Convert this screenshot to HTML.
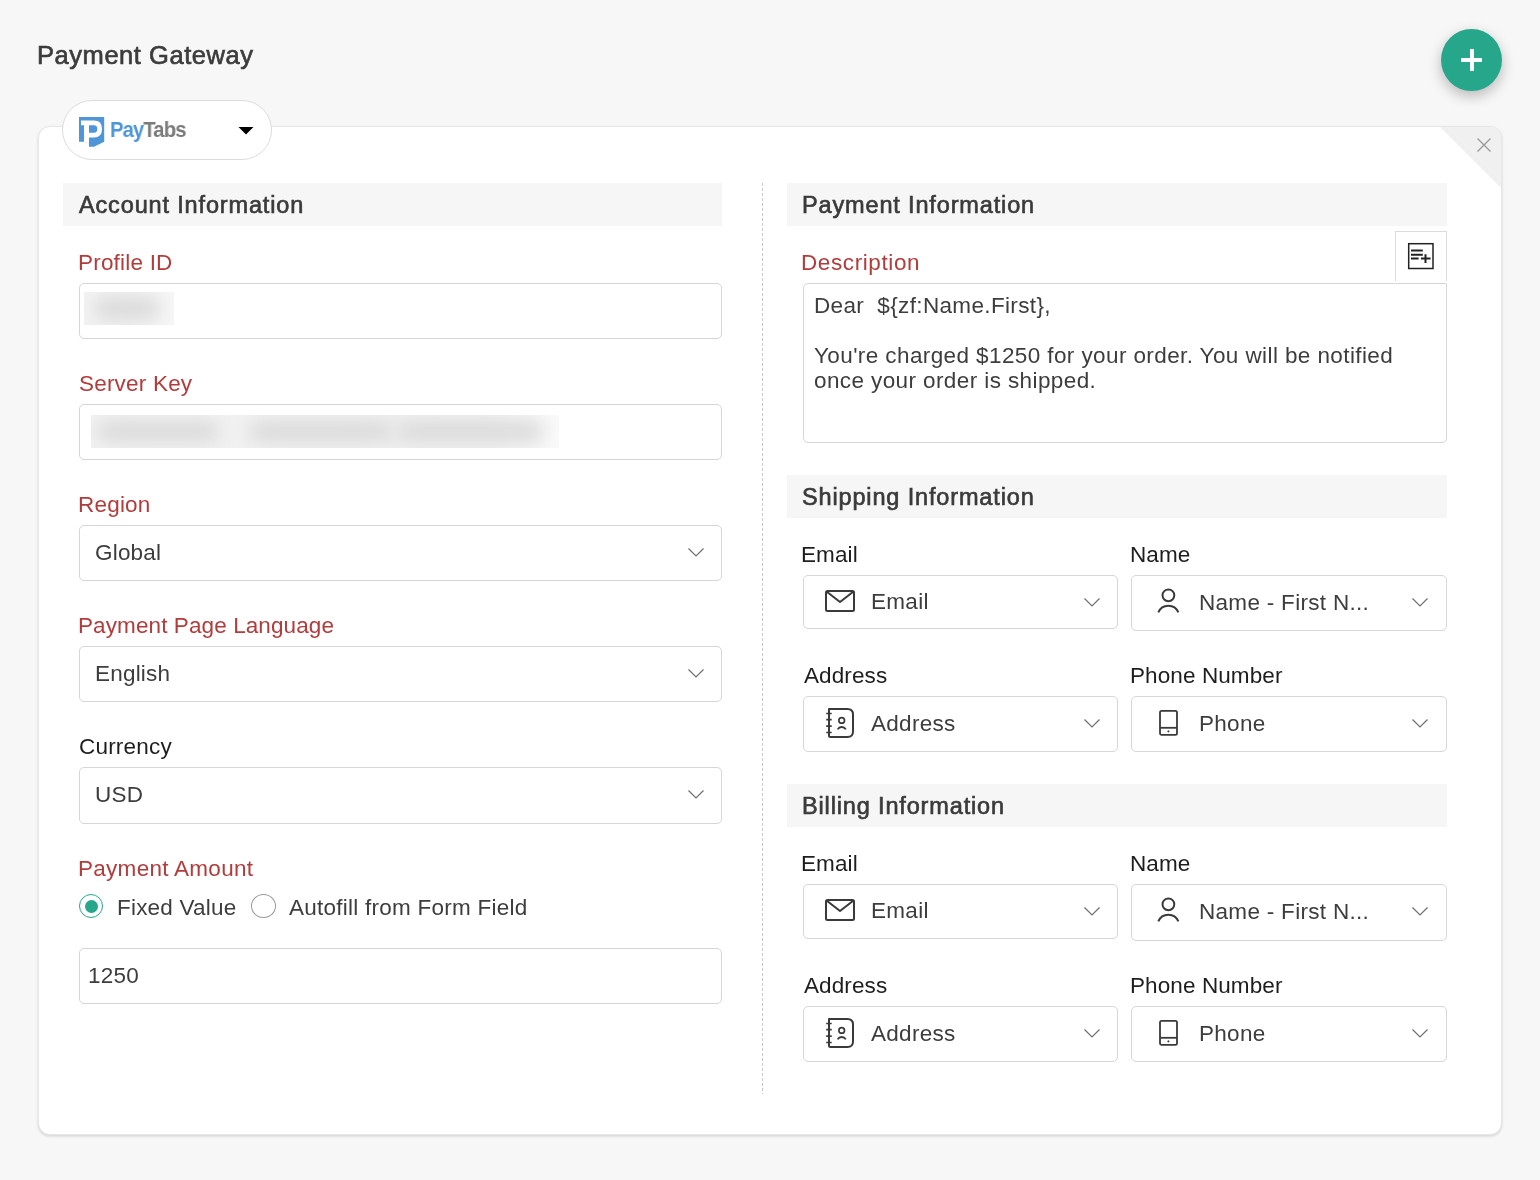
<!DOCTYPE html>
<html><head><meta charset="utf-8"><title>Payment Gateway</title>
<style>
html,body{margin:0;padding:0;}
body{width:1540px;height:1180px;background:#f7f7f7;position:relative;overflow:hidden;font-family:"Liberation Sans",sans-serif;-webkit-font-smoothing:antialiased;}
.t{position:absolute;white-space:pre;will-change:transform;}
.b{position:absolute;box-sizing:border-box;}
.i{position:absolute;overflow:visible;}
</style></head><body>
<div class="t" style="left:37px;top:38px;font-size:25.5px;line-height:34px;font-weight:400;color:#3c3c3c;letter-spacing:0.55px;-webkit-text-stroke:0.65px currentColor;">Payment Gateway</div>
<div class="b" style="left:1441px;top:29px;width:61px;height:62px;border-radius:50%;background:#26a68a;box-shadow:0 5px 14px rgba(0,0,0,0.26);"></div>
<div class="b" style="left:1461px;top:58px;width:21px;height:4px;background:#fff;"></div>
<div class="b" style="left:1469.5px;top:49px;width:4.0px;height:22px;background:#fff;"></div>
<div class="b" style="left:38px;top:126px;width:1464px;height:1009px;border:1px solid #e7e7e7;border-radius:12px;background:#fff;box-shadow:0 1px 3px rgba(0,0,0,0.1),0 2px 3px rgba(0,0,0,0.05);overflow:hidden;"><div style="position:absolute;right:0;top:0;width:0;height:0;border-top:61px solid #f0f0f0;border-left:61px solid transparent;"></div></div>
<svg class="i" style="left:1476px;top:137px" width="16" height="16" viewBox="0 0 16 16"><path d="M1.5 1.5 L14.5 14.5 M14.5 1.5 L1.5 14.5" stroke="#9a9a9a" stroke-width="1.4"/></svg>
<div class="b" style="left:62px;top:100px;width:210px;height:60px;border:1px solid #dcdcdc;border-radius:30px;background:#fff;"></div>
<svg class="i" style="left:78px;top:116px" width="30" height="34" viewBox="0 0 30 34"><path d="M1 1 H26.2 V25.7 L16 30.8 H11 V27.5 L6 25.7 H1 Z" fill="#4f96d8"/><path d="M3 4.6 H16 Q24 4.6 24 13 Q24 21.5 16 21.5 H11 V27.8 L6 25.7 V9.3 H3 Z M11 9.3 V16.8 H16 Q19.3 16.8 19.3 13 Q19.3 9.3 16 9.3 Z" fill="#fff" fill-rule="evenodd"/></svg>
<div class="t" style="left:109.5px;top:115px;font-size:22.5px;line-height:30px;font-weight:700;letter-spacing:-1px;transform:scaleX(0.9);transform-origin:0 0;"><span style="color:#4f96d8">Pay</span><span style="color:#7b7b7b">Tabs</span></div>
<svg class="i" style="left:237px;top:126px" width="18" height="10" viewBox="0 0 18 10"><path d="M1.5 1 H16.5 L9 8.6 Z" fill="#000"/></svg>
<div class="b" style="left:63px;top:183px;width:659px;height:43px;background:#f6f6f6;"></div>
<div class="t" style="left:79px;top:190px;font-size:23.5px;line-height:30px;font-weight:400;color:#3a3a3a;letter-spacing:0.85px;-webkit-text-stroke:0.65px currentColor;">Account Information</div>
<div class="t" style="left:78px;top:248px;font-size:22.5px;line-height:30px;font-weight:400;color:#b23b3b;letter-spacing:0.2px;">Profile ID</div>
<div class="b" style="left:79px;top:283px;width:643px;height:56px;border:1px solid #d6d6d6;border-radius:5px;background:#fff;"></div>
<div class="b" style="left:84px;top:292px;width:90px;height:33px;background:linear-gradient(to right,#f3f3f3,#f1f1f1 50%,#f7f7f7);overflow:hidden;"><div style="position:absolute;left:10px;top:6px;width:66px;height:21px;border-radius:10px;background:#d9d9d9;filter:blur(9px);"></div></div>
<div class="t" style="left:79px;top:369px;font-size:22.5px;line-height:30px;font-weight:400;color:#b23b3b;letter-spacing:0.2px;">Server Key</div>
<div class="b" style="left:79px;top:404px;width:643px;height:56px;border:1px solid #d6d6d6;border-radius:5px;background:#fff;"></div>
<div class="b" style="left:91px;top:415px;width:468px;height:33px;background:linear-gradient(to right,#f2f2f2,#f1f1f1 85%,#fafafa);overflow:hidden;"><div style="position:absolute;left:6px;top:6px;width:122px;height:21px;border-radius:9px;background:#dadada;filter:blur(9px);"></div><div style="position:absolute;left:158px;top:6px;width:144px;height:21px;border-radius:9px;background:#dadada;filter:blur(9px);"></div><div style="position:absolute;left:306px;top:6px;width:146px;height:21px;border-radius:9px;background:#dadada;filter:blur(9px);"></div></div>
<div class="t" style="left:78px;top:490px;font-size:22.5px;line-height:30px;font-weight:400;color:#b23b3b;letter-spacing:0.2px;">Region</div>
<div class="b" style="left:79px;top:525px;width:643px;height:56px;border:1px solid #d6d6d6;border-radius:5px;background:#fff;"></div>
<div class="t" style="left:95px;top:538px;font-size:22.5px;line-height:30px;font-weight:400;color:#3d3d3d;letter-spacing:0.2px;">Global</div>
<svg class="i" style="left:687px;top:546.5px" width="18" height="10" viewBox="0 0 18 10"><path d="M1.5 1.5 L9 9 L16.5 1.5" fill="none" stroke="#6e6e6e" stroke-width="1.2"/></svg>
<div class="t" style="left:78px;top:611px;font-size:22.5px;line-height:30px;font-weight:400;color:#b23b3b;letter-spacing:0.1px;">Payment Page Language</div>
<div class="b" style="left:79px;top:646px;width:643px;height:56px;border:1px solid #d6d6d6;border-radius:5px;background:#fff;"></div>
<div class="t" style="left:95px;top:659px;font-size:22.5px;line-height:30px;font-weight:400;color:#3d3d3d;letter-spacing:0.2px;">English</div>
<svg class="i" style="left:687px;top:667.5px" width="18" height="10" viewBox="0 0 18 10"><path d="M1.5 1.5 L9 9 L16.5 1.5" fill="none" stroke="#6e6e6e" stroke-width="1.2"/></svg>
<div class="t" style="left:79px;top:732px;font-size:22.5px;line-height:30px;font-weight:400;color:#1e1e1e;letter-spacing:0.2px;">Currency</div>
<div class="b" style="left:79px;top:767px;width:643px;height:57px;border:1px solid #d6d6d6;border-radius:5px;background:#fff;"></div>
<div class="t" style="left:95px;top:780px;font-size:22.5px;line-height:30px;font-weight:400;color:#3d3d3d;letter-spacing:0.2px;">USD</div>
<svg class="i" style="left:687px;top:788.5px" width="18" height="10" viewBox="0 0 18 10"><path d="M1.5 1.5 L9 9 L16.5 1.5" fill="none" stroke="#6e6e6e" stroke-width="1.2"/></svg>
<div class="t" style="left:78px;top:854px;font-size:22.5px;line-height:30px;font-weight:400;color:#b23b3b;letter-spacing:0.28px;">Payment Amount</div>
<div class="b" style="left:79px;top:894px;width:24px;height:24px;border-radius:50%;border:1.3px solid #26a68a;"></div>
<div class="b" style="left:84.5px;top:899.5px;width:13px;height:13px;border-radius:50%;background:#26a68a;"></div>
<div class="t" style="left:117px;top:893px;font-size:22.5px;line-height:30px;font-weight:400;color:#3d3d3d;letter-spacing:0.2px;">Fixed Value</div>
<div class="b" style="left:251px;top:894px;width:25px;height:24px;border-radius:50%;border:1.2px solid #9a9a9a;"></div>
<div class="t" style="left:289px;top:893px;font-size:22.5px;line-height:30px;font-weight:400;color:#3d3d3d;letter-spacing:0.25px;">Autofill from Form Field</div>
<div class="b" style="left:79px;top:948px;width:643px;height:56px;border:1px solid #d6d6d6;border-radius:5px;background:#fff;"></div>
<div class="t" style="left:88px;top:961px;font-size:22.5px;line-height:30px;font-weight:400;color:#3d3d3d;letter-spacing:0.2px;">1250</div>
<div class="b" style="left:762px;top:183px;width:1px;height:911px;background-image:linear-gradient(to bottom,#c8c8c8 0,#c8c8c8 3px,transparent 3px,transparent 5px);background-size:1px 5px;"></div>
<div class="b" style="left:787px;top:183px;width:660px;height:43px;background:#f6f6f6;"></div>
<div class="t" style="left:802px;top:190px;font-size:23.5px;line-height:30px;font-weight:400;color:#3a3a3a;letter-spacing:0.85px;-webkit-text-stroke:0.65px currentColor;">Payment Information</div>
<div class="t" style="left:801px;top:248px;font-size:22.5px;line-height:30px;font-weight:400;color:#b23b3b;letter-spacing:0.6px;">Description</div>
<div class="b" style="left:1395px;top:231px;width:52px;height:50px;border:1px solid #dcdcdc;border-bottom:none;background:#fff;"></div>
<svg class="i" style="left:1406px;top:241px" width="30" height="30" viewBox="0 0 30 30"><rect x="2.7" y="2.7" width="24.3" height="24.8" fill="none" stroke="#222" stroke-width="1.5"/><path d="M5 9.6 H16.8 M5 13.75 H16.8 M5 17.6 H12.6 M14.9 17.6 H24.5 M19.5 13.2 V22" stroke="#222" stroke-width="2" stroke-linecap="butt"/></svg>
<div class="b" style="left:803px;top:283px;width:644px;height:160px;border:1px solid #d6d6d6;border-radius:5px 0 5px 5px;background:#fff;"></div>
<div class="t" style="left:814px;top:291px;font-size:22.5px;line-height:30px;font-weight:400;color:#3d3d3d;letter-spacing:0.35px;">Dear&nbsp; ${zf:Name.First},</div>
<div class="t" style="left:814px;top:341px;font-size:22.5px;line-height:30px;font-weight:400;color:#3d3d3d;letter-spacing:0.4px;">You're charged $1250 for your order. You will be notified</div>
<div class="t" style="left:814px;top:366px;font-size:22.5px;line-height:30px;font-weight:400;color:#3d3d3d;letter-spacing:0.4px;">once your order is shipped.</div>
<div class="b" style="left:787px;top:475px;width:660px;height:43px;background:#f6f6f6;"></div>
<div class="t" style="left:802px;top:482px;font-size:23.5px;line-height:30px;font-weight:400;color:#3a3a3a;letter-spacing:0.85px;-webkit-text-stroke:0.65px currentColor;">Shipping Information</div>
<div class="t" style="left:801px;top:540px;font-size:22.5px;line-height:30px;font-weight:400;color:#1e1e1e;letter-spacing:0.1px;">Email</div>
<div class="t" style="left:1130px;top:540px;font-size:22.5px;line-height:30px;font-weight:400;color:#1e1e1e;letter-spacing:0.1px;">Name</div>
<div class="b" style="left:803px;top:575px;width:315px;height:54px;border:1px solid #d6d6d6;border-radius:5px;background:#fff;"></div>
<svg class="i" style="left:823px;top:588px" width="34" height="26" viewBox="0 0 34 26"><rect x="3" y="3" width="28" height="20" rx="1.5" fill="none" stroke="#3a3a3a" stroke-width="2"/><path d="M3.5 3.5 L17 14 L30.5 3.5" fill="none" stroke="#3a3a3a" stroke-width="2" stroke-linejoin="round"/></svg>
<div class="t" style="left:871px;top:587px;font-size:22.5px;line-height:30px;font-weight:400;color:#3d3d3d;letter-spacing:0.3px;">Email</div>
<svg class="i" style="left:1083px;top:596.5px" width="18" height="10" viewBox="0 0 18 10"><path d="M1.5 1.5 L9 9 L16.5 1.5" fill="none" stroke="#6e6e6e" stroke-width="1.2"/></svg>
<div class="b" style="left:1131px;top:575px;width:316px;height:56px;border:1px solid #d6d6d6;border-radius:5px;background:#fff;"></div>
<svg class="i" style="left:1153px;top:587px" width="30" height="30" viewBox="0 0 30 30"><circle cx="15.4" cy="8.3" r="5.9" fill="none" stroke="#3a3a3a" stroke-width="2"/><path d="M5.3 25.4 A10.9 10.9 0 0 1 25.4 25.4" fill="none" stroke="#3a3a3a" stroke-width="2"/></svg>
<div class="t" style="left:1199px;top:588px;font-size:22.5px;line-height:30px;font-weight:400;color:#3d3d3d;letter-spacing:0.3px;">Name - First N...</div>
<svg class="i" style="left:1411px;top:596.5px" width="18" height="10" viewBox="0 0 18 10"><path d="M1.5 1.5 L9 9 L16.5 1.5" fill="none" stroke="#6e6e6e" stroke-width="1.2"/></svg>
<div class="t" style="left:803.5px;top:661px;font-size:22.5px;line-height:30px;font-weight:400;color:#1e1e1e;letter-spacing:0.1px;">Address</div>
<div class="t" style="left:1130px;top:661px;font-size:22.5px;line-height:30px;font-weight:400;color:#1e1e1e;letter-spacing:0.1px;">Phone Number</div>
<div class="b" style="left:803px;top:696px;width:315px;height:56px;border:1px solid #d6d6d6;border-radius:5px;background:#fff;"></div>
<svg class="i" style="left:823px;top:705px" width="34" height="36" viewBox="0 0 34 36"><path d="M6 4 H24.5 Q30 4 30 9.5 V26.5 Q30 32 24.5 32 H7.5 Q6 32 6 30.5 Z" fill="none" stroke="#3a3a3a" stroke-width="2" stroke-linejoin="round"/><path d="M3.2 8.5 H8.7 M3.2 14.6 H8.7 M3.2 21.2 H8.7 M3.2 27.5 H8.7" stroke="#3a3a3a" stroke-width="1.7" stroke-linecap="butt"/><circle cx="18.7" cy="15.4" r="2.8" fill="none" stroke="#3a3a3a" stroke-width="1.7"/><path d="M14.6 24.4 A4.7 4.7 0 0 1 22.8 24.4" fill="none" stroke="#3a3a3a" stroke-width="1.8"/></svg>
<div class="t" style="left:871px;top:709px;font-size:22.5px;line-height:30px;font-weight:400;color:#3d3d3d;letter-spacing:0.3px;">Address</div>
<svg class="i" style="left:1083px;top:717.5px" width="18" height="10" viewBox="0 0 18 10"><path d="M1.5 1.5 L9 9 L16.5 1.5" fill="none" stroke="#6e6e6e" stroke-width="1.2"/></svg>
<div class="b" style="left:1131px;top:696px;width:316px;height:56px;border:1px solid #d6d6d6;border-radius:5px;background:#fff;"></div>
<svg class="i" style="left:1152px;top:708px" width="30" height="34" viewBox="0 0 30 34"><rect x="8" y="2.8" width="17" height="24" rx="1.6" fill="none" stroke="#3a3a3a" stroke-width="1.8"/><path d="M8 19.8 H25" stroke="#3a3a3a" stroke-width="1.8"/><path d="M15.4 23.4 H17.4 M16.4 22.4 V24.4" stroke="#3a3a3a" stroke-width="1"/></svg>
<div class="t" style="left:1199px;top:709px;font-size:22.5px;line-height:30px;font-weight:400;color:#3d3d3d;letter-spacing:0.3px;">Phone</div>
<svg class="i" style="left:1411px;top:717.5px" width="18" height="10" viewBox="0 0 18 10"><path d="M1.5 1.5 L9 9 L16.5 1.5" fill="none" stroke="#6e6e6e" stroke-width="1.2"/></svg>
<div class="b" style="left:787px;top:784px;width:660px;height:43px;background:#f6f6f6;"></div>
<div class="t" style="left:802px;top:791px;font-size:23.5px;line-height:30px;font-weight:400;color:#3a3a3a;letter-spacing:0.85px;-webkit-text-stroke:0.65px currentColor;">Billing Information</div>
<div class="t" style="left:801px;top:849px;font-size:22.5px;line-height:30px;font-weight:400;color:#1e1e1e;letter-spacing:0.1px;">Email</div>
<div class="t" style="left:1130px;top:849px;font-size:22.5px;line-height:30px;font-weight:400;color:#1e1e1e;letter-spacing:0.1px;">Name</div>
<div class="b" style="left:803px;top:884px;width:315px;height:55px;border:1px solid #d6d6d6;border-radius:5px;background:#fff;"></div>
<svg class="i" style="left:823px;top:897px" width="34" height="26" viewBox="0 0 34 26"><rect x="3" y="3" width="28" height="20" rx="1.5" fill="none" stroke="#3a3a3a" stroke-width="2"/><path d="M3.5 3.5 L17 14 L30.5 3.5" fill="none" stroke="#3a3a3a" stroke-width="2" stroke-linejoin="round"/></svg>
<div class="t" style="left:871px;top:896px;font-size:22.5px;line-height:30px;font-weight:400;color:#3d3d3d;letter-spacing:0.3px;">Email</div>
<svg class="i" style="left:1083px;top:905.5px" width="18" height="10" viewBox="0 0 18 10"><path d="M1.5 1.5 L9 9 L16.5 1.5" fill="none" stroke="#6e6e6e" stroke-width="1.2"/></svg>
<div class="b" style="left:1131px;top:884px;width:316px;height:57px;border:1px solid #d6d6d6;border-radius:5px;background:#fff;"></div>
<svg class="i" style="left:1153px;top:896px" width="30" height="30" viewBox="0 0 30 30"><circle cx="15.4" cy="8.3" r="5.9" fill="none" stroke="#3a3a3a" stroke-width="2"/><path d="M5.3 25.4 A10.9 10.9 0 0 1 25.4 25.4" fill="none" stroke="#3a3a3a" stroke-width="2"/></svg>
<div class="t" style="left:1199px;top:897px;font-size:22.5px;line-height:30px;font-weight:400;color:#3d3d3d;letter-spacing:0.3px;">Name - First N...</div>
<svg class="i" style="left:1411px;top:905.5px" width="18" height="10" viewBox="0 0 18 10"><path d="M1.5 1.5 L9 9 L16.5 1.5" fill="none" stroke="#6e6e6e" stroke-width="1.2"/></svg>
<div class="t" style="left:803.5px;top:971px;font-size:22.5px;line-height:30px;font-weight:400;color:#1e1e1e;letter-spacing:0.1px;">Address</div>
<div class="t" style="left:1130px;top:971px;font-size:22.5px;line-height:30px;font-weight:400;color:#1e1e1e;letter-spacing:0.1px;">Phone Number</div>
<div class="b" style="left:803px;top:1006px;width:315px;height:56px;border:1px solid #d6d6d6;border-radius:5px;background:#fff;"></div>
<svg class="i" style="left:823px;top:1015px" width="34" height="36" viewBox="0 0 34 36"><path d="M6 4 H24.5 Q30 4 30 9.5 V26.5 Q30 32 24.5 32 H7.5 Q6 32 6 30.5 Z" fill="none" stroke="#3a3a3a" stroke-width="2" stroke-linejoin="round"/><path d="M3.2 8.5 H8.7 M3.2 14.6 H8.7 M3.2 21.2 H8.7 M3.2 27.5 H8.7" stroke="#3a3a3a" stroke-width="1.7" stroke-linecap="butt"/><circle cx="18.7" cy="15.4" r="2.8" fill="none" stroke="#3a3a3a" stroke-width="1.7"/><path d="M14.6 24.4 A4.7 4.7 0 0 1 22.8 24.4" fill="none" stroke="#3a3a3a" stroke-width="1.8"/></svg>
<div class="t" style="left:871px;top:1019px;font-size:22.5px;line-height:30px;font-weight:400;color:#3d3d3d;letter-spacing:0.3px;">Address</div>
<svg class="i" style="left:1083px;top:1027.5px" width="18" height="10" viewBox="0 0 18 10"><path d="M1.5 1.5 L9 9 L16.5 1.5" fill="none" stroke="#6e6e6e" stroke-width="1.2"/></svg>
<div class="b" style="left:1131px;top:1006px;width:316px;height:56px;border:1px solid #d6d6d6;border-radius:5px;background:#fff;"></div>
<svg class="i" style="left:1152px;top:1018px" width="30" height="34" viewBox="0 0 30 34"><rect x="8" y="2.8" width="17" height="24" rx="1.6" fill="none" stroke="#3a3a3a" stroke-width="1.8"/><path d="M8 19.8 H25" stroke="#3a3a3a" stroke-width="1.8"/><path d="M15.4 23.4 H17.4 M16.4 22.4 V24.4" stroke="#3a3a3a" stroke-width="1"/></svg>
<div class="t" style="left:1199px;top:1019px;font-size:22.5px;line-height:30px;font-weight:400;color:#3d3d3d;letter-spacing:0.3px;">Phone</div>
<svg class="i" style="left:1411px;top:1027.5px" width="18" height="10" viewBox="0 0 18 10"><path d="M1.5 1.5 L9 9 L16.5 1.5" fill="none" stroke="#6e6e6e" stroke-width="1.2"/></svg>
</body></html>
